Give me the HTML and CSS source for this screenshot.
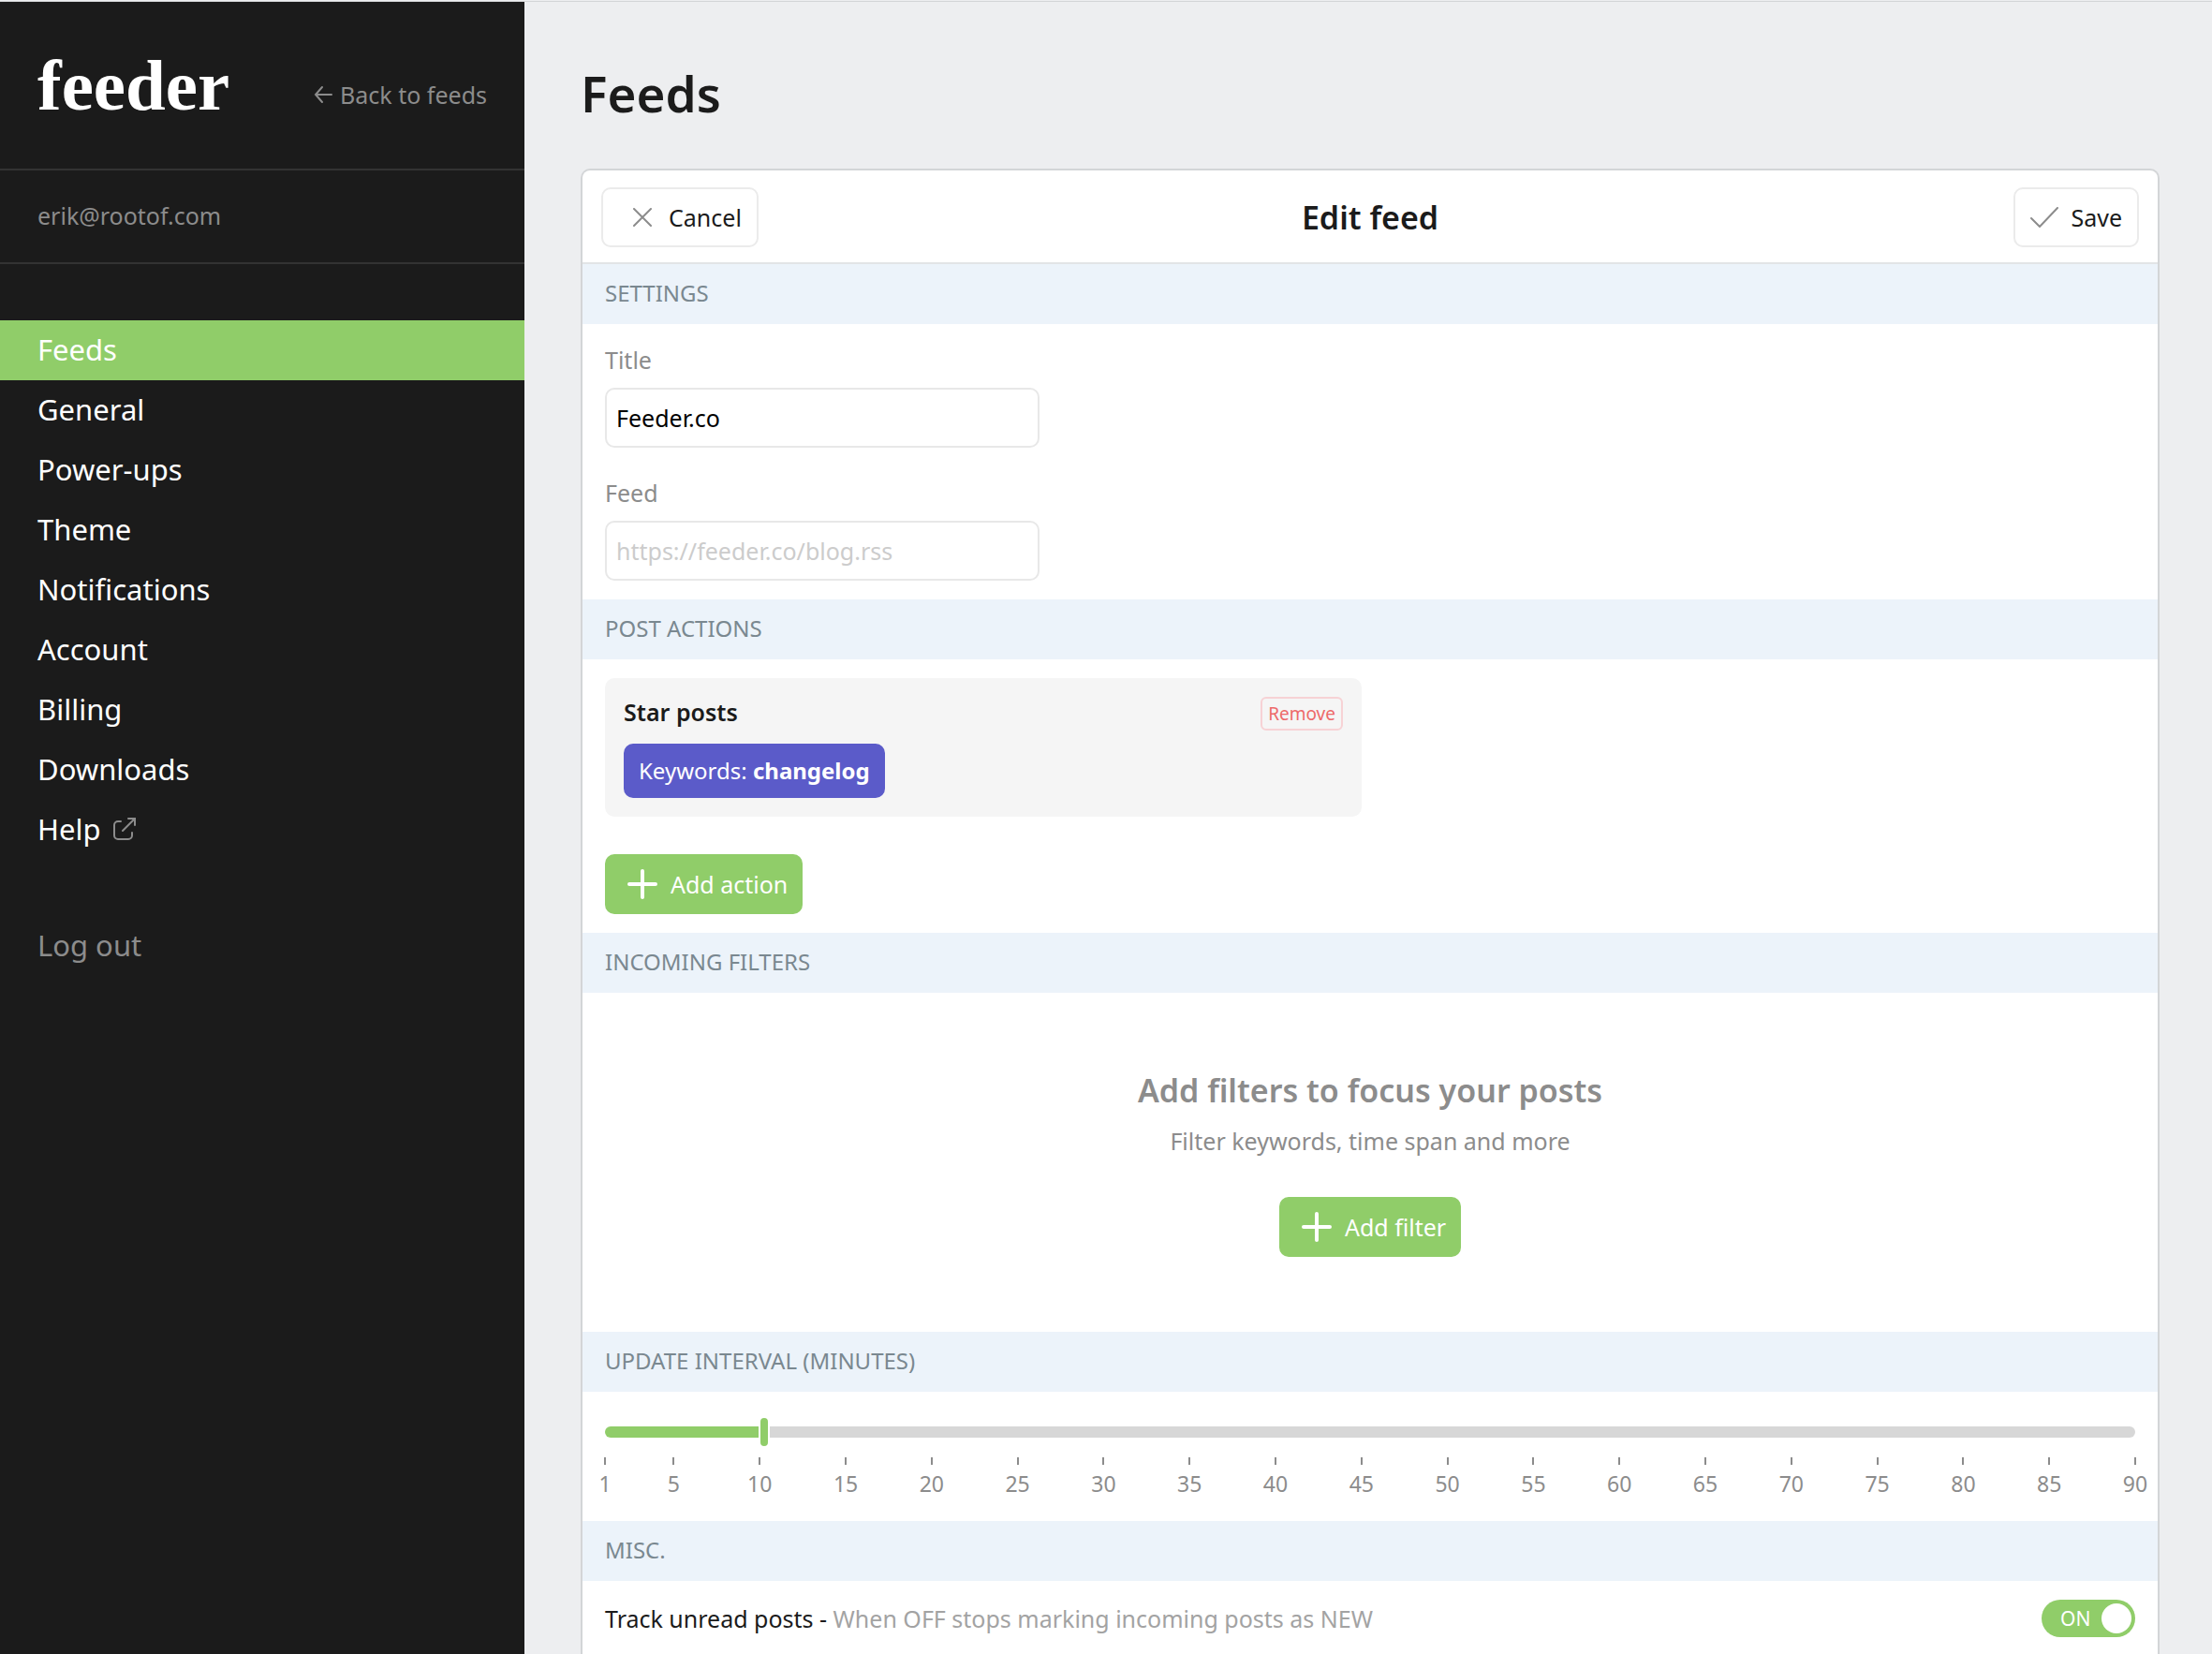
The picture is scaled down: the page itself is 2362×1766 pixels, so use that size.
FILE: index.html
```html
<!DOCTYPE html>
<html lang="en">
<head>
    <meta charset="UTF-8">
    <meta name="viewport" content="width=device-width, initial-scale=1.0">
    <title>Feeder - Edit feed</title>
    <link rel="stylesheet" href="styles.css">
</head>
<body>
    <div class="layout">
        <aside class="sidebar">
            <div class="sidebar-top">
                <a href="#" class="logo">feeder</a>
                <a href="#" class="back-link">
                    <svg width="20" height="20" viewBox="0 0 20 20"><path d="M19 10H2M9 2L2 10l7 8" /></svg>
                    Back to feeds
                </a>
            </div>
            <div class="account">erik@rootof.com</div>
            <nav class="menu">
                <a href="#" class="active">Feeds</a>
                <a href="#">General</a>
                <a href="#">Power-ups</a>
                <a href="#">Theme</a>
                <a href="#">Notifications</a>
                <a href="#">Account</a>
                <a href="#">Billing</a>
                <a href="#">Downloads</a>
                <a href="#">Help
                    <svg width="24" height="24" viewBox="0 0 24 24"><path d="M8 4H5a4 4 0 0 0-4 4v11a4 4 0 0 0 4 4h11a4 4 0 0 0 4-4v-3M16 1h7v7M23 1L10 14" /></svg>
                </a>
                <a href="#" class="logout">Log out</a>
            </nav>
        </aside>

        <main class="main">
            <h1>Feeds</h1>

            <form class="card">
                <header class="card-header">
                    <button type="button" class="btn btn-cancel">
                        <svg width="20" height="20" viewBox="0 0 20 20"><path d="M1 1l18 18M19 1L1 19" /></svg>
                        Cancel
                    </button>
                    <h2>Edit feed</h2>
                    <button type="submit" class="btn btn-save">
                        <svg width="30" height="22" viewBox="0 0 30 22"><path d="M1 12l9 9L29 1" /></svg>
                        Save
                    </button>
                </header>

                <!-- Settings -->
                <h3>SETTINGS</h3>
                <div class="section settings">
                    <div class="form-group">
                        <label for="title">Title</label>
                        <input type="text" id="title" name="title" value="Feeder.co">
                    </div>
                    <div class="form-group">
                        <label for="feed">Feed</label>
                        <input type="text" id="feed" name="feed" placeholder="https://feeder.co/blog.rss">
                    </div>
                </div>

                <!-- Post actions -->
                <h3>POST ACTIONS</h3>
                <div class="section">
                    <div class="action">
                        <div class="action-top">
                            <h4>Star posts</h4>
                            <button type="button" class="remove">Remove</button>
                        </div>
                        <button type="button" class="keywords">Keywords: <b>changelog</b></button>
                    </div>
                    <button type="button" class="btn btn-add">
                        <svg width="32" height="32" viewBox="0 0 32 32"><path d="M16 2v28M2 16h28" /></svg>
                        Add action
                    </button>
                </div>

                <!-- Filters -->
                <h3>INCOMING FILTERS</h3>
                <div class="empty">
                    <h2>Add filters to focus your posts</h2>
                    <p>Filter keywords, time span and more</p>
                    <button type="button" class="btn btn-add">
                        <svg width="32" height="32" viewBox="0 0 32 32"><path d="M16 2v28M2 16h28" /></svg>
                        Add filter
                    </button>
                </div>

                <!-- Update interval -->
                <h3><label for="interval">UPDATE INTERVAL (MINUTES)</label></h3>
                <div class="section interval">
                    <input type="range" id="interval" name="interval" min="1" max="90" value="10" style="--fill: 10.2%">
                    <div class="scale">
                        <span>1</span><span>5</span><span>10</span><span>15</span><span>20</span><span>25</span><span>30</span><span>35</span><span>40</span><span>45</span><span>50</span><span>55</span><span>60</span><span>65</span><span>70</span><span>75</span><span>80</span><span>85</span><span>90</span>
                    </div>
                </div>

                <!-- Misc -->
                <h3>MISC.</h3>
                <div class="section option">
                    <label for="track">Track unread posts - <span>When OFF stops marking incoming posts as NEW</span></label>
                    <div class="toggle">
                        <input type="checkbox" id="track" name="track" checked>
                        <span>ON</span>
                    </div>
                </div>
            </form>
        </main>
    </div>
</body>
</html>
```
FILE: styles.css
```css
* {
    box-sizing: border-box;
    margin: 0;
    padding: 0;
}

body {
    font-family: 'Noto Sans', sans-serif;
    font-size: 25px;
    line-height: 32px;
    color: #1b1b1b;
    background-color: #edeef0;
    padding-top: 1px;
}

a {
    color: inherit;
    text-decoration: none;
}

svg {
    fill: none;
    stroke: #8c8c8c;
    stroke-width: 2;
    stroke-linecap: round;
    flex-shrink: 0;
}

input, button {
    font: inherit;
}

.layout {
    display: flex;
    min-height: calc(100vh - 1px);
    border-top: 1px solid #d3d5d7;
}

/* Sidebar */
.sidebar {
    width: 560px;
    flex-shrink: 0;
    background-color: #1b1b1b;
}

.sidebar-top {
    display: flex;
    justify-content: space-between;
    align-items: center;
    height: 180px;
    padding: 0 40px;
    border-bottom: 2px solid #333333;
}

.logo {
    font-family: 'Liberation Serif', serif;
    font-size: 77px;
    font-weight: bold;
    line-height: 76px;
    color: #ffffff;
}

.back-link {
    display: flex;
    align-items: center;
    gap: 8px;
    padding-top: 20px;
    color: #8c8c8c;
}

.account {
    height: 100px;
    padding: 32px 40px;
    color: #8c8c8c;
    border-bottom: 2px solid #333333;
}

.menu {
    padding-top: 60px;
    font-size: 31px;
    color: #ffffff;
}

.menu a {
    display: flex;
    align-items: center;
    gap: 13px;
    height: 64px;
    padding: 0 40px 2px;
}

.menu .active {
    background-color: #90cd69;
}

.menu .logout {
    margin-top: 60px;
    color: #8c8c8c;
}

/* Main */
.main {
    flex: 1;
    display: flex;
    flex-direction: column;
    padding: 60px 56px 0 60px;
}

h1 {
    font-size: 53px;
    font-weight: 600;
    line-height: 76px;
    margin-bottom: 42px;
}

.card {
    flex: 1;
    background-color: #ffffff;
    border: 2px solid #d3d5d7;
    border-bottom: none;
    border-radius: 10px 10px 0 0;
}

.card-header {
    display: grid;
    grid-template-columns: 1fr auto 1fr;
    align-items: center;
    padding: 18px 20px 16px;
    border-bottom: 2px solid #e2e4e6;
}

h2 {
    font-size: 34px;
    font-weight: 600;
    line-height: 48px;
}

h3 {
    height: 64px;
    padding: 15px 24px;
    font-size: 24px;
    font-weight: normal;
    color: #7a8890;
    background-color: #ecf3fa;
}

.section {
    padding: 20px 24px;
}

/* Buttons */
.btn {
    display: flex;
    align-items: center;
    height: 64px;
    color: #1b1b1b;
    background-color: #ffffff;
    border: 2px solid #ebebeb;
    border-radius: 10px;
    cursor: pointer;
}

.btn-cancel {
    gap: 18px;
    justify-self: start;
    padding: 0 16px 0 32px;
}

.btn-save {
    gap: 13px;
    justify-self: end;
    padding: 0 16px;
}

.btn-add {
    gap: 14px;
    padding: 0 16px 0 24px;
    color: #ffffff;
    background-color: #90cd69;
    border: none;
}

.btn-add svg {
    stroke: #ffffff;
    stroke-width: 4;
}

/* Form group */
.settings {
    padding-top: 22px;
}

.form-group label {
    display: block;
    margin-bottom: 14px;
    color: #8c8c8c;
}

.form-group + .form-group {
    margin-top: 32px;
}

input[type="text"] {
    display: block;
    width: 464px;
    height: 64px;
    padding: 0 10px;
    color: #000000;
    background-color: #ffffff;
    border: 2px solid #e8e8e8;
    border-radius: 10px;
}

input::placeholder {
    color: #cccccc;
}

/* Post actions */
.action {
    max-width: 808px;
    margin-bottom: 40px;
    padding: 20px;
    background-color: #f5f5f5;
    border-radius: 10px;
}

.action-top {
    display: flex;
    justify-content: space-between;
    margin-bottom: 14px;
}

h4 {
    font-size: 25px;
    font-weight: 600;
}

.remove {
    height: 36px;
    padding: 0 6px;
    font-size: 19px;
    line-height: 28px;
    color: #ed6a6a;
    background-color: transparent;
    border: 2px solid #f7d2d5;
    border-radius: 6px;
}

.keywords {
    display: block;
    height: 58px;
    padding: 0 16px;
    font-size: 24px;
    color: #ffffff;
    background-color: #5b5bc9;
    border: none;
    border-radius: 10px;
}

/* Empty state */
.empty {
    display: flex;
    flex-direction: column;
    align-items: center;
    padding: 80px 24px;
    color: #8c8c8c;
}

.empty p {
    margin: 14px 0 44px;
}

/* Update interval */
.interval {
    padding: 26px 24px 24px;
}

input[type="range"] {
    appearance: none;
    display: block;
    width: 100%;
    height: 34px;
    background: transparent;
}

input[type="range"]::-webkit-slider-runnable-track {
    height: 12px;
    border-radius: 6px;
    background: linear-gradient(to right, #90cd69 var(--fill), #d7d7d7 var(--fill));
}

input[type="range"]::-webkit-slider-thumb {
    appearance: none;
    width: 12px;
    height: 34px;
    margin-top: -11px;
    background-color: #90cd69;
    border: 2px solid #ffffff;
    border-radius: 6px;
}

.scale {
    display: grid;
    grid-template-columns: 4fr repeat(17, 5fr) 0;
    margin-top: 10px;
    font-size: 23px;
    color: #8c8c8c;
}

.scale span {
    width: 40px;
    margin-left: -20px;
    text-align: center;
}

.scale span::before {
    content: '';
    display: block;
    width: 2px;
    height: 8px;
    margin: 0 auto 4px;
    background-color: #8c8c8c;
}

/* Misc */
.option {
    display: flex;
    justify-content: space-between;
    align-items: center;
    padding-bottom: 16px;
}

.option label span {
    color: #a3a3a3;
}

.toggle {
    position: relative;
}

.toggle input {
    appearance: none;
    display: block;
    width: 100px;
    height: 40px;
    padding: 4px;
    background-color: #90cd69;
    border-radius: 20px;
}

.toggle input::before {
    content: '';
    display: block;
    width: 32px;
    height: 32px;
    margin-left: 60px;
    background-color: #ffffff;
    border-radius: 50%;
}

.toggle span {
    position: absolute;
    top: 4px;
    left: 20px;
    font-size: 21px;
    color: #ffffff;
    pointer-events: none;
}
```
